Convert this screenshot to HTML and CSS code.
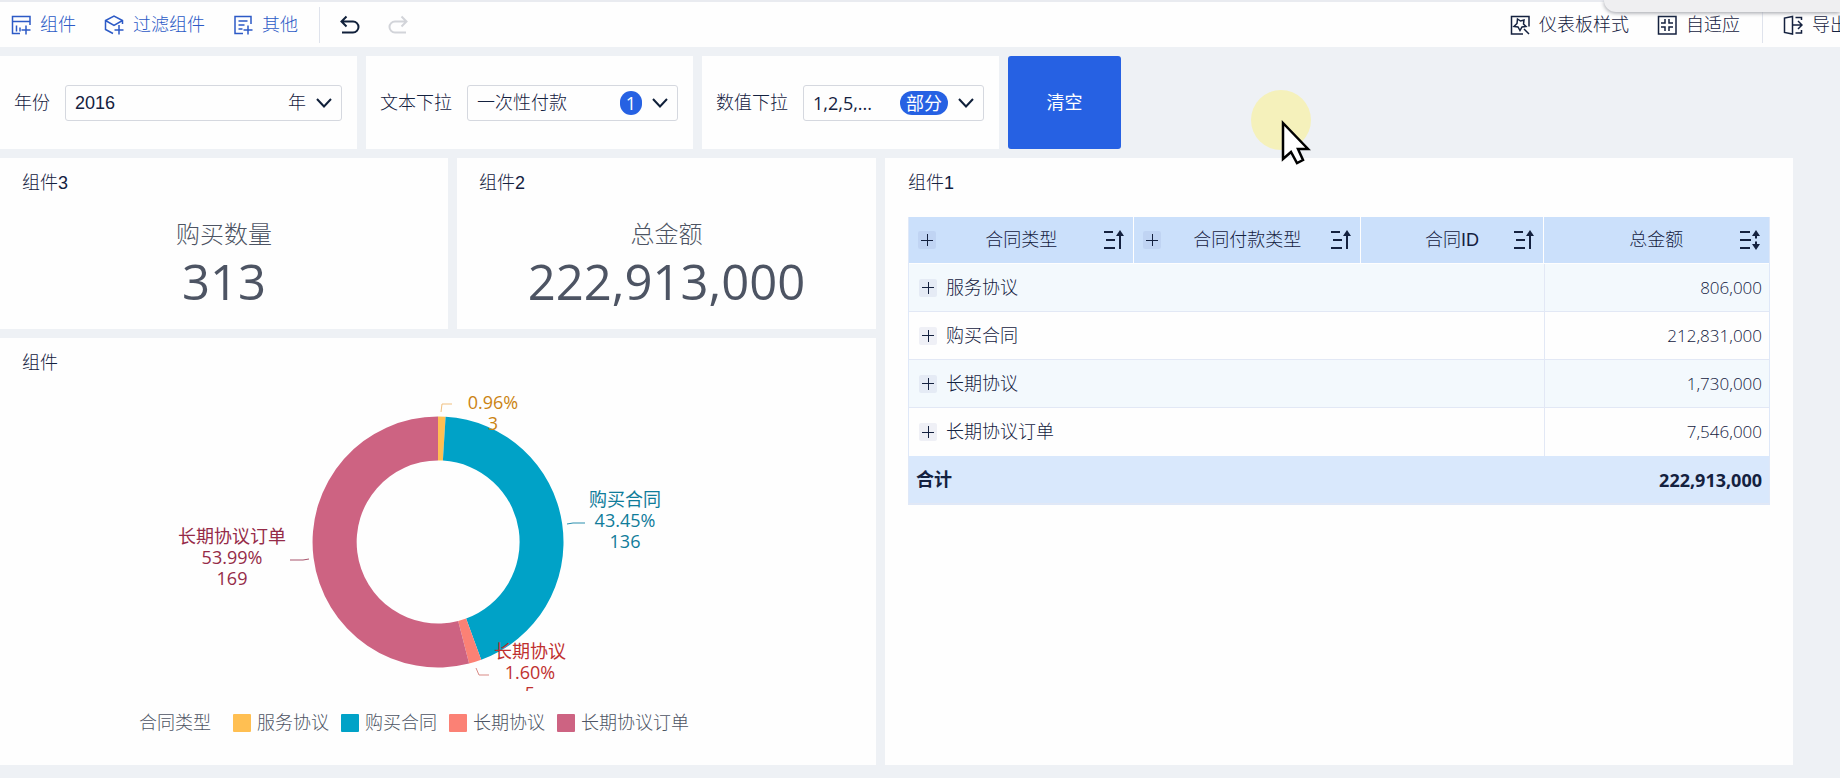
FILE: index.html
```html
<!DOCTYPE html>
<html lang="zh-CN">
<head>
<meta charset="utf-8">
<title>仪表板</title>
<link rel="stylesheet" href="styles.css">
</head>
<body>
<header class="toolbar">
  <button class="tool tool-add" type="button">
    <svg class="icon" viewBox="0 0 20 20"><path d="M19 10V1.500H1.500v17H9M1.500 6.500H19M5.500 10.500v6M9 12.500v4M15 10.500v9M10.500 15h9"/></svg>组件
  </button>
  <button class="tool tool-add" type="button">
    <svg class="icon" viewBox="0 0 20 20"><path d="M18.500 9V5.500L10 1 1.500 5.500v9L9 18.500M1.500 5.500 10 10.500l8.500-5M15 10v9.500M10.500 15h9"/></svg>过滤组件
  </button>
  <button class="tool tool-add" type="button">
    <svg class="icon" viewBox="0 0 20 20"><path d="M18 9V1.500H2v17h8M5.500 6h9M5.500 10h6M5.500 14h4M15 10.500v9M10.500 15h9"/></svg>其他
  </button>
  <span class="divider"></span>
  <button class="tool tool-undo" type="button" aria-label="撤销">
    <svg class="icon icon-bold" viewBox="0 0 20 20"><path d="M6.500 1.500 1.500 6.500l5 5M1.500 6.500h11.500a5.500 5.500 0 0 1 0 11H2"/></svg>
  </button>
  <button class="tool tool-redo" type="button" aria-label="重做" disabled>
    <svg class="icon icon-bold" viewBox="0 0 20 20"><path d="M13.500 1.500l5 5-5 5M18.500 6.500H7a5.500 5.500 0 0 0 0 11h11"/></svg>
  </button>
  <div class="toolbar-end">
    <button class="tool" type="button">
      <svg class="icon" viewBox="0 0 20 20"><path d="M19 11.500V1.500H1.500V19H13M7.500 4l3 2 3.500-1-.5 4 2.500 2.500-4 .5-2 3.500-2-3.500-4-.5 3-3zM14 14l5 5"/></svg>仪表板样式
    </button>
    <button class="tool" type="button">
      <svg class="icon" viewBox="0 0 20 20"><path d="M1.500 1.500h17.500V19H1.500zM8 4v4H4M12 4v4h4M8 16v-4H4M12 16v-4h4"/></svg>自适应
    </button>
    <span class="divider"></span>
    <button class="tool" type="button">
      <svg class="icon" viewBox="0 0 20 20"><path d="M9.500 3V1.500L1.500 3v14.500l8 1.500V3M12.500 2.500h6V5M12.500 18h6v-3M9.500 10h9M15 6l4 4-4 4"/></svg>导出
    </button>
  </div>
</header>
<div class="corner-panel"></div>

<main class="board">
  <form class="filters">
    <div class="card filter">
      <label for="year">年份</label>
      <div class="field">
        <select id="year"><option>2016</option></select>
        <span>年</span>
        <svg class="chevron" viewBox="0 0 16 10"><path d="M1 1l7 7.500L15 1"/></svg>
      </div>
    </div>
    <div class="card filter">
      <label for="text-drop">文本下拉</label>
      <div class="field">
        <select id="text-drop"><option>一次性付款</option></select>
        <span class="badge">1</span>
        <svg class="chevron" viewBox="0 0 16 10"><path d="M1 1l7 7.500L15 1"/></svg>
      </div>
    </div>
    <div class="card filter">
      <label for="num-drop">数值下拉</label>
      <div class="field">
        <select id="num-drop" class="numeric"><option>1,2,5,...</option></select>
        <span class="badge badge-wide">部分</span>
        <svg class="chevron" viewBox="0 0 16 10"><path d="M1 1l7 7.500L15 1"/></svg>
      </div>
    </div>
    <button class="clear" type="button">清空</button>
  </form>

  <div class="panels">
    <div class="left">
      <div class="kpis">
        <section class="card kpi">
          <h2 class="title">组件3</h2>
          <p class="kpi-label">购买数量</p>
          <p class="kpi-value">313</p>
        </section>
        <section class="card kpi">
          <h2 class="title">组件2</h2>
          <p class="kpi-label">总金额</p>
          <p class="kpi-value">222,913,000</p>
        </section>
      </div>
      <section class="card chart-card">
        <h2 class="title">组件</h2>
        <svg class="chart" viewBox="0 0 876 296" role="img" aria-label="合同类型">
          <g transform="translate(438 147)">
            <path fill="#ffbf52" d="M0-125.500A125.500 125.500 0 0 1 7.600-125.300L4.900-81.400A81.500 81.500 0 0 0 0-81.500Z"/>
            <path fill="#00a2c7" d="M7.600-125.300A125.500 125.500 0 0 1 43.200 117.800L28.100 76.500A81.500 81.500 0 0 0 4.900-81.400Z"/>
            <path fill="#fb8175" d="M43.200 117.800A125.500 125.500 0 0 1 31.100 121.600L20.200 79A81.500 81.500 0 0 0 28.100 76.500Z"/>
            <path fill="#cd6382" d="M31.100 121.600A125.500 125.500 0 1 1 0-125.500V-81.500A81.500 81.500 0 1 0 20.200 79Z"/>
          </g>
          <g class="leader">
            <path stroke="#f0c080" d="M441 17l1-8h10"/>
            <path stroke="#2a8fae" d="M567 129l6-1h12"/>
            <path stroke="#d98a85" d="M476 273l3 7h10"/>
            <path stroke="#a8546c" d="M309 164l-6 1h-13"/>
          </g>
          <g class="slice-text">
            <text fill="#cb8412"><tspan x="493" y="14">0.96%</tspan><tspan x="493" y="35">3</tspan></text>
            <text fill="#107c9a"><tspan x="625" y="111">购买合同</tspan><tspan x="625" y="132">43.45%</tspan><tspan x="625" y="153">136</tspan></text>
            <text fill="#c0302f"><tspan x="530" y="263">长期协议</tspan><tspan x="530" y="284">1.60%</tspan><tspan x="530" y="305">5</tspan></text>
            <text fill="#952b48"><tspan x="232" y="148">长期协议订单</tspan><tspan x="232" y="169">53.99%</tspan><tspan x="232" y="190">169</tspan></text>
          </g>
        </svg>
        <div class="legend">
          <span class="legend-title">合同类型</span>
          <ul class="legend-list">
            <li><i class="swatch amber"></i>服务协议</li>
            <li><i class="swatch teal"></i>购买合同</li>
            <li><i class="swatch coral"></i>长期协议</li>
            <li><i class="swatch rose"></i>长期协议订单</li>
          </ul>
        </div>
      </section>
    </div>

    <section class="card table-card">
      <h2 class="title">组件1</h2>
      <table class="grid">
        <colgroup><col class="c1"><col class="c2"><col class="c3"><col class="c4"></colgroup>
        <thead>
          <tr>
            <th><div class="head"><button class="plus" type="button" aria-label="展开"></button><span>合同类型</span><svg class="icon icon-bold" viewBox="0 0 20 20"><path d="M0 2h9M2 10h9M0 18h11M16 19V4"/><path class="solid" d="M16 0l4 6h-8z"/></svg></div></th>
            <th><div class="head"><button class="plus" type="button" aria-label="展开"></button><span>合同付款类型</span><svg class="icon icon-bold" viewBox="0 0 20 20"><path d="M0 2h9M2 10h9M0 18h11M16 19V4"/><path class="solid" d="M16 0l4 6h-8z"/></svg></div></th>
            <th><div class="head"><i></i><span>合同ID</span><svg class="icon icon-bold" viewBox="0 0 20 20"><path d="M0 2h9M2 10h9M0 18h11M16 19V4"/><path class="solid" d="M16 0l4 6h-8z"/></svg></div></th>
            <th><div class="head"><i></i><span>总金额</span><svg class="icon icon-bold" viewBox="0 0 20 20"><path d="M0 2h10M0 10h11M0 18h10M16 4v4.500M16 11.500V16"/><path class="solid" d="M16 0l4 6h-8zM16 20l4-6h-8z"/></svg></div></th>
          </tr>
        </thead>
        <tbody>
          <tr><td colspan="3"><div class="name"><button class="plus" type="button" aria-label="展开"></button>服务协议</div></td><td class="num">806,000</td></tr>
          <tr><td colspan="3"><div class="name"><button class="plus" type="button" aria-label="展开"></button>购买合同</div></td><td class="num">212,831,000</td></tr>
          <tr><td colspan="3"><div class="name"><button class="plus" type="button" aria-label="展开"></button>长期协议</div></td><td class="num">1,730,000</td></tr>
          <tr><td colspan="3"><div class="name"><button class="plus" type="button" aria-label="展开"></button>长期协议订单</div></td><td class="num">7,546,000</td></tr>
        </tbody>
        <tfoot>
          <tr><td colspan="3">合计</td><td class="num">222,913,000</td></tr>
        </tfoot>
      </table>
    </section>
  </div>
</main>

<svg class="pointer" viewBox="0 0 62 76"><circle cx="31" cy="30" r="30" fill="#f5f1bb"/><path d="M33 33v36l8-7 6 11 6-3-5-11h10z" fill="#fff" stroke="#000" stroke-width="2.500"/></svg>
</body>
</html>
```
FILE: styles.css
```css
* { box-sizing: border-box; }

body {
  margin: 0;
  min-height: 100vh;
  display: flex;
  flex-direction: column;
  position: relative;
  overflow: hidden;
  background: #eef1f5;
  color: #14213f;
  font: 300 18px/24px "Liberation Sans", "Noto Sans CJK SC", sans-serif;
}

button, select {
  font: inherit;
  color: inherit;
  background: none;
  border: 0;
  padding: 0;
}

h2, p, ul { margin: 0; padding: 0; font: inherit; }

.toolbar {
  display: flex;
  align-items: center;
  height: 47px;
  padding-left: 11px;
  border-top: 2px solid #e9ebf0;
  background: #fefefe;
  white-space: nowrap;
}
.tool { display: flex; align-items: center; gap: 9px; }
.tool-add { color: #2c5ac6; margin-right: 28px; }
.tool-undo { margin: 0 28px 0 20px; color: #10203a; }
.tool-redo { color: #d2d4d9; }
.toolbar-end { display: flex; align-items: center; margin: 0 -8px 0 auto; }
.toolbar-end .tool + .tool { margin-left: 28px; }
.toolbar-end .divider { margin: 0 20px 0 22px; }
.divider { width: 1px; height: 36px; margin-left: -7px; background: #dfe3ec; }

.icon {
  width: 20px;
  height: 20px;
  flex: none;
  fill: none;
  stroke: currentColor;
  stroke-width: 1.5;
}
.icon-bold { stroke-width: 2; }
.solid { fill: currentColor; stroke: none; }

.corner-panel {
  position: absolute;
  top: 0;
  right: 0;
  width: 236px;
  height: 12px;
  background: #efeff1;
  border-bottom-left-radius: 14px;
  box-shadow: 0 1px 4px #9a9ca4;
}

.board {
  flex: 1;
  display: flex;
  flex-direction: column;
  gap: 9px;
  padding: 9px 47px 13px 0;
}
.card { background: #fefefe; }

.filters {
  display: grid;
  grid-template-columns: 357fr 327fr 297fr 113fr 663fr;
  gap: 9px;
}
.filter {
  display: flex;
  align-items: center;
  gap: 15px;
  height: 93px;
  padding: 0 15px 0 14px;
  white-space: nowrap;
}
.field {
  flex: 1;
  min-width: 0;
  display: flex;
  align-items: center;
  gap: 10px;
  height: 36px;
  padding: 0 9px;
  border: 1px solid #d5d8df;
  border-radius: 3px;
}
.field select { flex: 1; min-width: 0; appearance: none; outline: 0; }
.field .numeric { font-family: "Open Sans", sans-serif; font-weight: 400; }
.chevron {
  width: 16px;
  height: 10px;
  flex: none;
  fill: none;
  stroke: #10203a;
  stroke-width: 2;
}
.badge {
  min-width: 22px;
  height: 24px;
  border-radius: 12px;
  background: #2661e3;
  color: #fff;
  text-align: center;
  font-weight: 400;
  font-family: "Open Sans", "Noto Sans CJK SC", sans-serif;
}
.badge-wide { width: 48px; }
.clear { background: #2661e3; color: #fff; border-radius: 3px; font-weight: 400; }

.panels {
  flex: 1;
  display: grid;
  grid-template-columns: 876fr 908fr;
  gap: 9px;
}
.left { display: flex; flex-direction: column; gap: 9px; }
.kpis { display: grid; grid-template-columns: 448fr 419fr; gap: 9px; }
.title { padding: 13px 0 0 22px; }
.kpi { padding-bottom: 19px; color: #4d5463; text-align: center; }
.kpi .title { text-align: left; color: #14213f; }
.kpi-label { margin-top: 22px; font-size: 24px; line-height: 36px; }
.kpi-value {
  font: 400 49px/57px "Open Sans", sans-serif;
}

.chart-card { flex: 1; display: flex; flex-direction: column; }
.chart {
  flex: 1;
  width: 100%;
  min-height: 0;
  margin-top: 20px;
  overflow: hidden;
}
.leader { fill: none; }
.slice-text {
  font: 400 18px "Open Sans", "Noto Sans CJK SC", sans-serif;
  text-anchor: middle;
}
.legend {
  display: flex;
  justify-content: center;
  gap: 22px;
  padding: 20px 48px 30px 0;
  color: #4d5463;
}
.legend-list { display: flex; gap: 12px; list-style: none; }
.legend-list li { display: flex; align-items: center; gap: 6px; }
.swatch { width: 18px; height: 18px; border-radius: 1px; }
.amber { background: #ffbf52; }
.teal { background: #00a2c7; }
.coral { background: #fb8175; }
.rose { background: #cd6382; }

.table-card { padding: 0 23px; }
.table-card .title { padding-left: 0; }
.grid {
  width: 100%;
  margin-top: 22px;
  table-layout: fixed;
  border-collapse: separate;
  border-spacing: 0;
  border: 1px solid #dfe8f8;
  border-top: 0;
}
.c1, .c4 { width: 26.2%; }
.c2 { width: 26.4%; }
.c3 { width: 21.2%; }
.grid th {
  height: 47px;
  padding: 0 9px;
  background: #cbe0fb;
  border-right: 1px solid #fefefe;
  border-bottom: 1px solid #fefefe;
  font-weight: inherit;
}
.grid th:last-child { border-right: 0; }
.head { display: grid; grid-template-columns: 20px 1fr 20px; align-items: center; }
.grid td { height: 48px; padding: 0 7px; border-bottom: 1px solid #e2e8f5; }
.grid .num {
  border-left: 1px solid #e2e8f5;
  text-align: right;
  font-family: "Open Sans", sans-serif;
  font-size: 17px;
}
.grid tbody tr:nth-child(odd) { background: #f3f9fd; }
.grid tbody tr:last-child td { border-bottom: 0; }
.grid tfoot td, .grid tfoot .num {
  background: #d9e8fc;
  border-left: 0;
  font-weight: 700;
  font-size: 18px;
}
.name { display: flex; align-items: center; gap: 9px; padding-left: 3px; }
.plus {
  width: 18px;
  height: 18px;
  border-radius: 2px;
  background:
    linear-gradient(#14213f, #14213f) center / 12px 1px no-repeat,
    linear-gradient(#14213f, #14213f) center / 1px 12px no-repeat,
    rgba(90, 100, 170, 0.09);
}

.pointer {
  position: absolute;
  left: 1250px;
  top: 90px;
  width: 62px;
  height: 76px;
}
```
